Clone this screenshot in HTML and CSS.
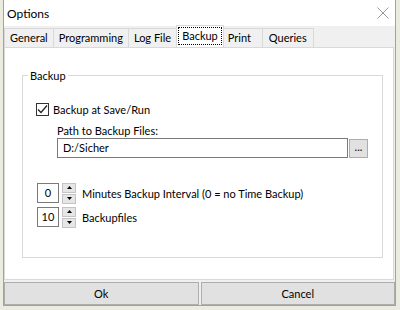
FILE: index.html
```html
<!DOCTYPE html>
<html>
<head>
    <meta charset="UTF-8">
    <title>Options</title>
    <link rel="stylesheet" href="styles.css">
</head>
<body>
    <div class="window">
        <div class="titlebar">
            <span class="title">Options</span>
            <svg class="close" width="12" height="12" viewBox="0 0 12 12">
                <path d="M0.5 0.5L11.5 11.5M11.5 0.5L0.5 11.5" stroke="#9a9a9a" stroke-width="1" fill="none"/>
            </svg>
        </div>

        <!-- tabs -->
        <div class="tabs">
            <div class="tab">General</div>
            <div class="tab">Programming</div>
            <div class="tab">Log File</div>
            <div class="tab active"><span class="focus">Backup</span></div>
            <div class="tab">Print</div>
            <div class="tab">Queries</div>
        </div>

        <div class="panel">
            <fieldset class="group">
                <legend>Backup</legend>

                <label class="check-row">
                    <span class="checkbox">
                        <svg width="11" height="11" viewBox="0 0 11 11">
                            <path d="M1 5.5L4 8.5L10 1.5" stroke="#222" stroke-width="1.3" fill="none"/>
                        </svg>
                    </span>
                    Backup at Save/Run
                </label>

                <div class="path-label">Path to Backup Files:</div>
                <div class="path-row">
                    <div class="textbox">D:/Sicher</div>
                    <div class="browse">...</div>
                </div>

                <div class="spin-row first">
                    <div class="spin-box">0</div>
                    <div class="spin-btns">
                        <div class="spin-btn"><svg width="5" height="3" viewBox="0 0 5 3"><path d="M0 3L2.5 0L5 3Z" fill="#000"/></svg></div>
                        <div class="spin-btn"><svg width="5" height="3" viewBox="0 0 5 3"><path d="M0 0L2.5 3L5 0Z" fill="#000"/></svg></div>
                    </div>
                    <span>Minutes Backup Interval (0 = no Time Backup)</span>
                </div>
                <div class="spin-row">
                    <div class="spin-box">10</div>
                    <div class="spin-btns">
                        <div class="spin-btn"><svg width="5" height="3" viewBox="0 0 5 3"><path d="M0 3L2.5 0L5 3Z" fill="#000"/></svg></div>
                        <div class="spin-btn"><svg width="5" height="3" viewBox="0 0 5 3"><path d="M0 0L2.5 3L5 0Z" fill="#000"/></svg></div>
                    </div>
                    <span>Backupfiles</span>
                </div>
            </fieldset>
        </div>

        <div class="footer">
            <button class="btn">Ok</button>
            <button class="btn">Cancel</button>
        </div>
    </div>
</body>
</html>
```

FILE: styles.css
```css
html,body,div,span,fieldset,legend,label,button{ margin: 0; padding: 0; font-family: Lato, "Noto Sans", sans-serif; font-size: 11px; color: #000;}
body{ background: #ecebdf; height: 310px; overflow: hidden;}

.window{ margin-left: 3px; width: 391px; height: 305px; border: 1px solid #a39bc2; border-top: none; background: #f0f0f0;}

.titlebar{ height: 26px; background: #fff; display: flex; align-items: center; justify-content: space-between; padding: 0 6px 0 3px;}
.title{ font-size: 12px;}
.close{ display: block;}

.tabs{ height: 21px; display: flex; align-items: flex-end; background: #f0f0f0;}
.tab{ min-width: 29px; height: 18px; line-height: 17px; padding: 0 5px; border: 1px solid #d9d9d9; border-bottom: none; background: #f0f0f0; margin-left: -1px;}
.tab:first-child{ margin-left: 0;}
.tab:last-child{ padding: 0 6px;}
.tab.active{ height: 20px; padding: 1px 1px 0; margin: 0 -1px 0 -1px; background: #fff; position: relative; z-index: 1;}
.tab .focus{ display: block; height: 16px; line-height: 15px; padding: 0 3px; border: 1px dotted #000;}

.panel{ width: 388px; height: 231px; background: #fff; border: 1px solid #d9d9d9;}

.group{ margin: 20px 0 0 17px; width: 359px; height: 188px; padding: 0; border: 1px solid #d9d9d9;}
.group legend{ margin-left: 5px; padding: 0 2px; line-height: 15px;}

.check-row{ display: flex; align-items: center; height: 15px; margin: 19px 0 0 13px;}
.checkbox{ width: 11px; height: 11px; border: 1px solid #333; margin-right: 4px; background: #fff;}
.checkbox svg{ display: block;}

.path-label{ margin: 6px 0 0 34px; line-height: 15px;}
.path-row{ display: flex; align-items: flex-end; margin-left: 34px;}
.textbox{ width: 284px; height: 18px; line-height: 18px; padding-left: 5px; border: 1px solid #7a7a7a;}
.browse{ width: 17px; height: 17px; line-height: 14px; text-align: center; background: #e1e1e1; border: 1px solid #adadad; margin-left: 1px;}

.spin-row{ display: flex; align-items: center; height: 20px; margin: 4px 0 0 14px;}
.spin-row.first{ margin-top: 25px;}
.spin-box{ width: 20px; height: 18px; line-height: 18px; text-align: center; border: 1px solid #7a7a7a;}
.spin-btns{ display: flex; flex-direction: column; gap: 1px; margin: 0 6px 0 3px;}
.spin-btn{ width: 12px; height: 8px; border: 1px solid #c4c4c4; background: #e6e6e6; display: flex; align-items: center; justify-content: center;}
.spin-btn svg{ display: block;}

.footer{ height: 25px; padding-top: 2px; display: flex; gap: 2px; box-sizing: border-box;}
.btn{ flex: 1; height: 23px; background: #e1e1e1; border: 1px solid #adadad;}
```
